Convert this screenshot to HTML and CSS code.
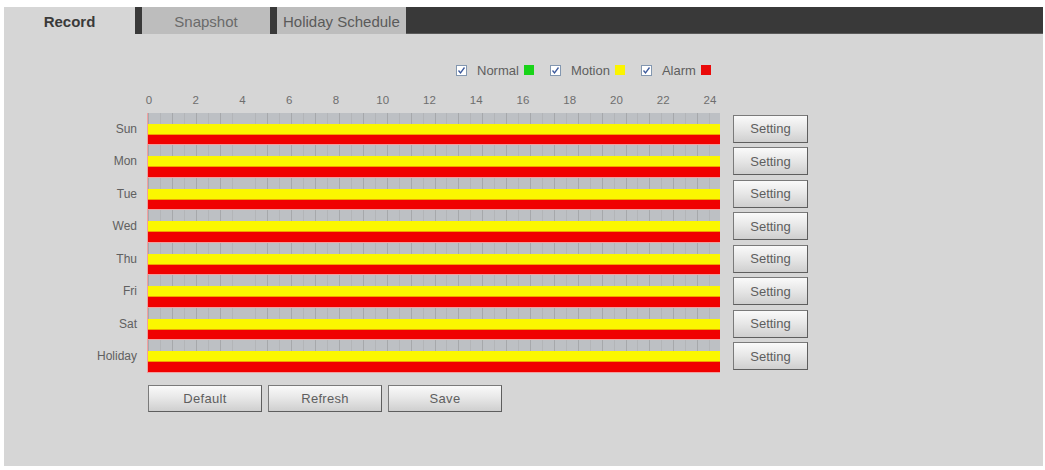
FILE: index.html
```html
<!DOCTYPE html>
<html>
<head>
<meta charset="utf-8">
<link rel="stylesheet" href="styles.css">
</head>
<body>
<div class="panel">
  <div class="tabs">
    <div class="tab tab-active">Record</div>
    <div class="tab-sep"></div>
    <div class="tab tab-snap">Snapshot</div>
    <div class="tab-sep"></div>
    <div class="tab tab-holiday">Holiday Schedule</div>
    <div class="tab-rest"></div>
  </div>
  <div class="content">
    <div class="legend">
      <span class="chk"><svg viewBox="0 0 11 11" width="11" height="11"><path d="M2.5 5.5 L4.5 8 L8.5 2.5" fill="none" stroke="#3d5a9c" stroke-width="1.3"/></svg></span>
      <span class="legend-text">Normal</span>
      <span class="swatch sw-green"></span>
      <span class="chk chk-next"><svg viewBox="0 0 11 11" width="11" height="11"><path d="M2.5 5.5 L4.5 8 L8.5 2.5" fill="none" stroke="#3d5a9c" stroke-width="1.3"/></svg></span>
      <span class="legend-text">Motion</span>
      <span class="swatch sw-yellow"></span>
      <span class="chk chk-next"><svg viewBox="0 0 11 11" width="11" height="11"><path d="M2.5 5.5 L4.5 8 L8.5 2.5" fill="none" stroke="#3d5a9c" stroke-width="1.3"/></svg></span>
      <span class="legend-text">Alarm</span>
      <span class="swatch sw-red"></span>
    </div>
    <div class="hours">
      <span>0</span><span>2</span><span>4</span><span>6</span><span>8</span><span>10</span><span>12</span><span>14</span><span>16</span><span>18</span><span>20</span><span>22</span><span>24</span>
    </div>
    <div class="rows">
      <div class="row"><div class="day">Sun</div><div class="track"><div class="b-grey"></div><div class="b-yellow"></div><div class="b-red"></div></div><button class="btn btn-setting">Setting</button></div>
      <div class="row"><div class="day">Mon</div><div class="track"><div class="b-grey"></div><div class="b-yellow"></div><div class="b-red"></div></div><button class="btn btn-setting">Setting</button></div>
      <div class="row"><div class="day">Tue</div><div class="track"><div class="b-grey"></div><div class="b-yellow"></div><div class="b-red"></div></div><button class="btn btn-setting">Setting</button></div>
      <div class="row"><div class="day">Wed</div><div class="track"><div class="b-grey"></div><div class="b-yellow"></div><div class="b-red"></div></div><button class="btn btn-setting">Setting</button></div>
      <div class="row"><div class="day">Thu</div><div class="track"><div class="b-grey"></div><div class="b-yellow"></div><div class="b-red"></div></div><button class="btn btn-setting">Setting</button></div>
      <div class="row"><div class="day">Fri</div><div class="track"><div class="b-grey"></div><div class="b-yellow"></div><div class="b-red"></div></div><button class="btn btn-setting">Setting</button></div>
      <div class="row"><div class="day">Sat</div><div class="track"><div class="b-grey"></div><div class="b-yellow"></div><div class="b-red"></div></div><button class="btn btn-setting">Setting</button></div>
      <div class="row"><div class="day">Holiday</div><div class="track"><div class="b-grey"></div><div class="b-yellow"></div><div class="b-red"></div></div><button class="btn btn-setting">Setting</button></div>
    </div>
    <div class="actions">
      <button class="btn btn-action">Default</button>
      <button class="btn btn-action">Refresh</button>
      <button class="btn btn-action">Save</button>
    </div>
  </div>
</div>
</body>
</html>
```

FILE: styles.css
```css
* { box-sizing: border-box; }
html, body { margin: 0; padding: 0; background: #ffffff; }
body {
  font-family: "Liberation Sans", Arial, sans-serif;
  width: 1045px;
  height: 470px;
  overflow: hidden;
}
.panel {
  margin: 7px 0 0 4px;
  width: 1039px;
  height: 459px;
  background: #d6d6d6;
}
.tabs {
  display: flex;
  height: 27px;
  background: #393939;
}
.tab {
  height: 27px;
  line-height: 29px;
  font-size: 15px;
  text-align: center;
  white-space: nowrap;
}
.tab-active {
  width: 131px;
  background: #d6d6d6;
  color: #3a3a3a;
  font-weight: bold;
}
.tab-snap {
  width: 128px;
  background: #bdbdbd;
  color: #6a6a6a;
}
.tab-holiday {
  padding: 0 6px;
  background: #bdbdbd;
  color: #5a5a5a;
}
.tab-sep {
  width: 7px;
  background: #393939;
}
.tab-rest {
  flex: 1;
  background: #393939;
  border-bottom: 1px solid #5a5a5a;
}
.content {
  padding-top: 29px;
}
.legend {
  display: flex;
  align-items: center;
  height: 14px;
  padding-left: 452px;
  font-size: 13px;
  color: #5e5e5e;
}
.chk {
  width: 11px;
  height: 11px;
  border: 1px solid #8397b0;
  background: #ffffff;
  display: flex;
}
.chk svg { display: block; margin: -1px; }
.chk-next { margin-left: 16px; }
.legend-text { margin-left: 10px; }
.swatch {
  width: 10px;
  height: 10px;
  margin-left: 5px;
}
.sw-green { background: #19d419; }
.sw-yellow { background: #fbf400; }
.sw-red { background: #ea0a0a; }
.hours {
  display: flex;
  justify-content: space-between;
  margin: 16px 0 0 145px;
  width: 561px;
  height: 14px;
  line-height: 14px;
  font-size: 11.5px;
  color: #6e6e6e;
}
.hours span {
  width: 0;
  display: flex;
  justify-content: center;
  white-space: nowrap;
}
.rows {
  margin-top: 5.7px;
}
.row {
  display: flex;
  height: 32.5px;
}
.day {
  width: 143px;
  padding-right: 10px;
  text-align: right;
  line-height: 32.5px;
  font-size: 12px;
  color: #606060;
}
.track {
  width: 573px;
  display: flex;
  flex-direction: column;
  border-left: 1px solid #f2a0a0;
}
.b-grey {
  height: 11px;
  background-color: #bdc0c4;
  background-image:
    repeating-linear-gradient(90deg, #a6a8ab 0 1px, transparent 1px 23.875px),
    repeating-linear-gradient(90deg, #b3b5b8 0 1px, transparent 1px 11.9375px);
}
.b-yellow {
  height: 11px;
  background: #fbf700;
  border-bottom: 1px solid #f0a400;
}
.b-red {
  flex: 1;
  background: #f00000;
  border-bottom: 1px solid #f2a0a0;
}
.btn {
  font-family: "Liberation Sans", Arial, sans-serif;
  color: #5e5e5e;
  background: linear-gradient(#fafafa, #e6e6e6 50%, #cfcfcf);
  border: 1px solid #7a7a7a;
  border-right-color: #5e5e5e;
  border-bottom-color: #5e5e5e;
  padding: 0;
  margin: 0;
}
.btn-setting {
  width: 75px;
  height: 28px;
  margin: 2px 0 0 13px;
  font-size: 13px;
}
.actions {
  display: flex;
  gap: 6px;
  margin: 12px 0 0 144px;
}
.btn-action {
  width: 114px;
  height: 27px;
  font-size: 13px;
  letter-spacing: 0.3px;
}
```
